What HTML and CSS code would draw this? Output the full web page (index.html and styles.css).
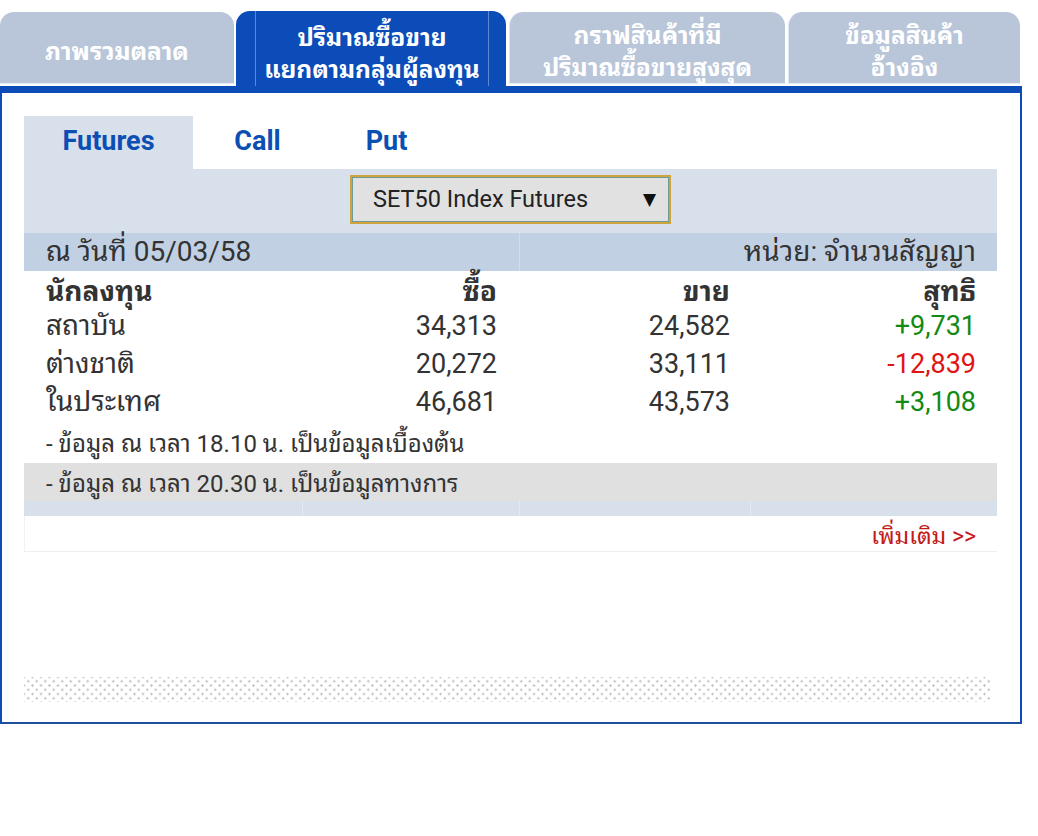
FILE: index.html
```html
<!DOCTYPE html>
<html lang="th">
<head>
<meta charset="utf-8">
<title>ปริมาณซื้อขายแยกตามกลุ่มผู้ลงทุน</title>
<link rel="stylesheet" href="styles.css">
</head>
<body>
<div class="page">
  <div class="tabs">
    <div class="tab tab-w1">ภาพรวมตลาด</div>
    <div class="tab tab-active tab-w2"><div class="tab-inner">ปริมาณซื้อขาย<br>แยกตามกลุ่มผู้ลงทุน</div></div>
    <div class="tab tab-w3">กราฟสินค้าที่มี<br>ปริมาณซื้อขายสูงสุด</div>
    <div class="tab tab-w4">ข้อมูลสินค้า<br>อ้างอิง</div>
  </div>
  <div class="box">
    <div class="panel">
      <div class="subtabs">
        <div class="subtab subtab-active">Futures</div>
        <div class="subtab">Call</div>
        <div class="subtab">Put</div>
      </div>
      <div class="select-row">
        <div class="select"><span>SET50 Index Futures</span><span class="arrow">▼</span></div>
      </div>
      <div class="date-row">
        <div class="date-cell">ณ วันที่ 05/03/58</div>
        <div class="date-cell unit">หน่วย: จำนวนสัญญา</div>
      </div>
      <div class="grid head">
        <div class="c-name">นักลงทุน</div>
        <div class="c-num">ซื้อ</div>
        <div class="c-num">ขาย</div>
        <div class="c-num c-last">สุทธิ</div>
      </div>
      <div class="grid row">
        <div class="c-name">สถาบัน</div>
        <div class="c-num">34,313</div>
        <div class="c-num">24,582</div>
        <div class="c-num c-last pos">+9,731</div>
      </div>
      <div class="grid row">
        <div class="c-name">ต่างชาติ</div>
        <div class="c-num">20,272</div>
        <div class="c-num">33,111</div>
        <div class="c-num c-last neg">-12,839</div>
      </div>
      <div class="grid row">
        <div class="c-name">ในประเทศ</div>
        <div class="c-num">46,681</div>
        <div class="c-num">43,573</div>
        <div class="c-num c-last pos">+3,108</div>
      </div>
      <div class="note note1">- ข้อมูล ณ เวลา 18.10 น. เป็นข้อมูลเบื้องต้น</div>
      <div class="note note2">- ข้อมูล ณ เวลา 20.30 น. เป็นข้อมูลทางการ</div>
      <div class="grid strip">
        <div></div><div></div><div></div><div></div>
      </div>
      <div class="more"><span>เพิ่มเติม &gt;&gt;</span></div>
    </div>
    <div class="dots"></div>
  </div>
</div>
</body>
</html>
```
FILE: styles.css
```css
* { box-sizing: border-box; }
html, body { margin: 0; padding: 0; background: #fff; }
body {
  font-family: Roboto, "Noto Sans Thai Looped", "Noto Sans Thai", "Noto Sans", "DejaVu Sans", sans-serif;
  color: #333;
}
.page { width: 1022px; }

.tabs {
  display: flex;
  align-items: flex-end;
  padding-top: 11px;
  height: 86px;
}
.tab {
  height: 72px;
  margin-bottom: 2px;
  background: #b9c5d9;
  border-radius: 14px 14px 0 0;
  color: #fff;
  font-weight: bold;
  font-size: 24.5px;
  line-height: 32px;
  text-align: center;
  display: flex;
  align-items: center;
  justify-content: center;
  border-left: 1px solid #dfe5ef;
  border-bottom: 1px solid #e8ecf3;
  padding-top: 9px;
}
.tab-w1 { width: 234px; margin-right: 2px; border-left: none; }
.tab-w2 { width: 270px; margin-right: 3px; }
.tab-w3 { width: 276px; margin-right: 3px; }
.tab-w4 { width: 232px; }
.tab-active {
  height: 75px;
  margin-bottom: 0;
  background: #0b4cb9;
  border: none;
  padding: 0 17px 0 19px;
  align-items: stretch;
}
.tab-inner {
  flex: 1;
  border-left: 1px solid #5f88d2;
  border-right: 1px solid #5f88d2;
  display: flex;
  align-items: center;
  justify-content: center;
  padding-top: 11px;
}

.box {
  border-top: 7px solid #0b4cb9;
  border-left: 2px solid #0b4cb9;
  border-right: 2px solid #0b4cb9;
  border-bottom: 2px solid #1d4f9f;
  padding: 23px 23px 20px 22px;
  height: 638px;
}
.panel { width: 973px; }

.subtabs { display: flex; height: 53px; }
.subtab {
  width: 129px;
  display: flex;
  align-items: center;
  justify-content: center;
  font-size: 27px;
  font-weight: bold;
  color: #0b4fb3;
  padding-bottom: 4px;
}
.subtab-active { width: 169px; background: #d8e0eb; }

.select-row {
  height: 64px;
  background: #d8e0eb;
  display: flex;
  justify-content: center;
  padding-top: 6px;
}
.select {
  width: 321px;
  height: 49px;
  background: #e1e1e1;
  border: 2px solid #d0a43c;
  box-shadow: inset 0 0 0 1px #6d9c98;
  display: flex;
  align-items: center;
  justify-content: space-between;
  padding: 0 13px 2px 21px;
  font-size: 23.5px;
  color: #222;
}
.arrow { font-size: 17px; color: #111; }

.date-row {
  height: 38px;
  background: #c2d0e4;
  display: grid;
  grid-template-columns: 495px 1fr;
  grid-template-rows: 38px;
  font-size: 28px;
  line-height: 1;
}
.date-cell {
  padding-left: 22px;
  display: flex;
  align-items: center;
}
.date-cell.unit {
  border-left: 1px solid #d3ddec;
  justify-content: flex-end;
  padding-right: 21px;
}

.grid {
  display: grid;
  grid-template-columns: 278px 217px 231px 1fr;
  line-height: 1;
}
.head { height: 36px; padding-top: 6px; grid-template-rows: 30px; font-weight: bold; font-size: 28px; align-items: center; }
.row { height: 38px; grid-template-rows: 38px; align-items: center; }
.row .c-name { font-size: 28px; }
.row .c-num { font-size: 27px; }
.c-name { padding-left: 22px; }
.c-num { text-align: right; padding-right: 22px; }
.grid .c-num:nth-child(3) { padding-right: 20px; }
.c-last { padding-right: 21px; }
.pos { color: #138a13; }
.neg { color: #e01414; }

.note {
  font-size: 24px;
  line-height: 1;
  padding-left: 22px;
  padding-top: 4px;
  display: flex;
  align-items: center;
}
.note1 { height: 42px; }
.note2 { height: 38px; background: #e0e0e0; }

.strip {
  height: 15px;
  grid-template-rows: 15px;
  background: #d8e0eb;
}
.strip > div + div { border-left: 1px solid #e5eaf2; }

.more {
  height: 36px;
  line-height: 1;
  border-left: 1px solid #f2f2f2;
  border-bottom: 1px solid #efefef;
  display: flex;
  align-items: center;
  justify-content: flex-end;
  padding-right: 21px;
  padding-top: 6px;
  font-size: 23px;
  color: #c41a1a;
}

.dots {
  width: 967px;
  height: 25px;
  margin-top: 125px;
  background-color: #fff;
  background-image:
    radial-gradient(circle at center, #c2c2c2 0.9px, transparent 1.4px),
    radial-gradient(circle at center, #c2c2c2 0.9px, transparent 1.4px);
  background-size: 8.5px 8.5px;
  background-position: 0 0, 4.25px 4.25px;
}
```
